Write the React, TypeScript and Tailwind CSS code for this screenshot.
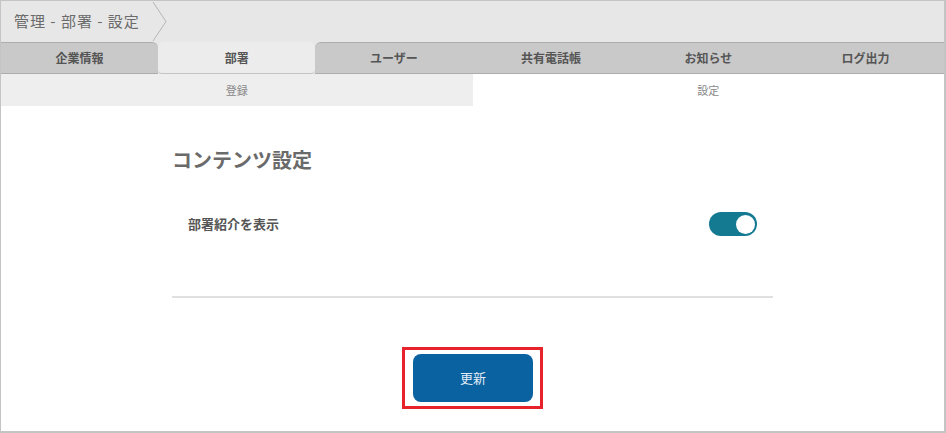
import { useState } from "react";

const tabs = ["企業情報", "部署", "ユーザー", "共有電話帳", "お知らせ", "ログ出力"];
const activeTab = 1;

function tabClass(i: number) {
  if (i === activeTab) {
    return "flex-1 h-[32px] flex items-center justify-center bg-[#ececec] rounded-t-[6px] rounded-b-[4px] border-b border-[#c4c4c4]";
  }
  if (i === activeTab - 1) {
    return "flex-1 h-[32px] flex items-center justify-center bg-[#c9c9c9] border-t border-b border-[#adadad] rounded-tr-[6px]";
  }
  if (i === activeTab + 1) {
    return "flex-1 h-[32px] flex items-center justify-center bg-[#c9c9c9] border-t border-b border-[#adadad] rounded-tl-[6px]";
  }
  return "flex-1 h-[32px] flex items-center justify-center bg-[#c9c9c9] border-t border-b border-[#adadad]";
}

export default function App() {
  const [on, setOn] = useState(true);

  return (
    <div
      className="w-[946px] h-[433px] border-t border-l border-r-2 border-b-2 border-[#c4c4c4] bg-white overflow-hidden"
      style={{ fontFamily: '"Noto Sans CJK JP", "Noto Sans", sans-serif' }}
    >
      {/* breadcrumb */}
      <div className="h-[41px] bg-[#e7e7e7] flex items-center">
        <span className="pl-[13px] text-[15px] text-[#6b6b6b] tracking-[1px]">管理 - 部署 - 設定</span>
        <svg width="18" height="41" viewBox="0 0 18 41" className="ml-[11px]">
          <path d="M2 1 L15 20.5 L2 40" fill="none" stroke="#b5b5b5" strokeWidth="1" />
        </svg>
      </div>

      {/* main tabs */}
      <div className="flex bg-[#e7e7e7]">
        {tabs.map((t, i) => (
          <div key={t} className={tabClass(i)}>
            <span className="text-[12px] font-bold text-[#555]">{t}</span>
          </div>
        ))}
      </div>

      {/* sub tabs */}
      <div className="flex h-[32px]">
        <div className="flex-1 bg-[#eeeeee] flex items-center justify-center text-[11px] text-[#888]">登録</div>
        <div className="flex-1 bg-white flex items-center justify-center text-[11px] text-[#888]">設定</div>
      </div>

      {/* content */}
      <div className="w-[601px] mx-auto">
        <h2 className="mt-[40px] h-[28px] leading-[28px] text-[20px] font-bold text-[#6a6a6a]">コンテンツ設定</h2>

        <div className="mt-[38px] h-[24px] flex items-center justify-between pl-4 pr-4">
          <span className="text-[13px] font-bold text-[#555]">部署紹介を表示</span>
          <button
            type="button"
            onClick={() => setOn(!on)}
            className={
              on
                ? "w-[48px] h-[24px] rounded-full bg-[#137a91] flex items-center justify-end pr-[2px]"
                : "w-[48px] h-[24px] rounded-full bg-[#c4c4c4] flex items-center justify-start pl-[2px]"
            }
          >
            <span className="block w-[19px] h-[19px] rounded-full bg-white" />
          </button>
        </div>

        <div className="mt-[60px] h-[2px] bg-[#e0e0e0]" />

        <div className="mt-[49px] flex justify-center">
          <div className="w-[141px] h-[62px] border-[3px] border-[#e8222a] flex items-center justify-center pl-[1px]">
            <button
              type="button"
              className="w-[120px] h-[48px] rounded-[8px] bg-[#0a62a0] text-[13px] text-[#e2ecf6]"
            >
              更新
            </button>
          </div>
        </div>
      </div>
    </div>
  );
}
